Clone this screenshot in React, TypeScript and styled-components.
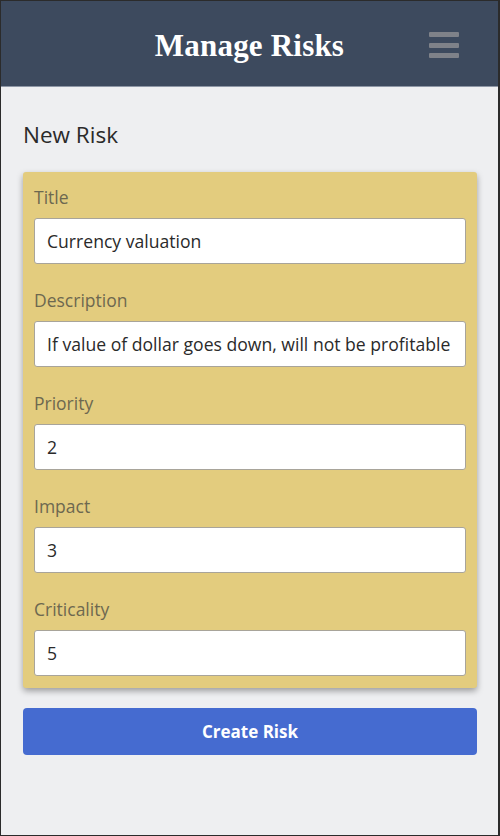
import React from 'react'
import styled, { createGlobalStyle } from 'styled-components'

const GlobalStyle = createGlobalStyle`
  html, body {
    margin: 0;
    padding: 0;
    background: #eeeff1;
  }
  * {
    box-sizing: border-box;
  }
`

const Frame = styled.div`
  width: 500px;
  height: 836px;
  border: 1px solid #2b2b2b;
  border-right-width: 2px;
  background: #eeeff1;
  font-family: 'Open Sans', 'Noto Sans', sans-serif;
  display: flex;
  flex-direction: column;
`

const Header = styled.header`
  height: 86px;
  flex-shrink: 0;
  padding-top: 5px;
  background: #3d4a5e;
  display: flex;
  align-items: center;
  justify-content: center;
  position: relative;
  border-bottom: 1px solid #8e97a6;
`

const Title = styled.h1`
  margin: 0;
  color: #ffffff;
  font-family: 'Liberation Serif', 'Times New Roman', serif;
  font-weight: bold;
  font-size: 31px;
  letter-spacing: 0.2px;
`

const MenuButton = styled.button`
  position: absolute;
  right: 39px;
  top: 31px;
  width: 30px;
  height: 26px;
  padding: 0;
  border: none;
  background: transparent;
  display: flex;
  flex-direction: column;
  justify-content: space-between;
  cursor: pointer;

  span {
    display: block;
    height: 5px;
    border-radius: 1px;
    background: #7f8289;
  }
`

const Content = styled.main`
  padding: 33px 21px 0 22px;
  display: flex;
  flex-direction: column;
`

const Heading = styled.h2`
  margin: 0 0 22px;
  font-size: 22.5px;
  font-weight: 400;
  color: #2a2a2a;
  line-height: 30px;
`

const Card = styled.form`
  background: #e3cc7e;
  border-radius: 3px;
  box-shadow: 0 3px 6px rgba(0, 0, 0, 0.35);
  padding: 10px 11px 12px 11px;
  display: flex;
  flex-direction: column;
`

const Field = styled.div<{ $first?: boolean }>`
  display: flex;
  flex-direction: column;
  margin-top: ${(p) => (p.$first ? '0' : '21px')};
`

const Label = styled.label`
  font-size: 17.5px;
  color: #6d6850;
  line-height: 30px;
  margin-bottom: 6px;
`

const Input = styled.input`
  height: 46px;
  width: 100%;
  border: 1px solid #a8a49a;
  border-radius: 3px;
  background: #ffffff;
  padding: 0 12px;
  font-family: 'Open Sans', 'Noto Sans', sans-serif;
  font-size: 17.6px;
  color: #2a2a2a;
  outline: none;
`

const SubmitButton = styled.button`
  margin-top: 20px;
  height: 47px;
  width: 100%;
  border: none;
  border-radius: 4px;
  background: #456bd0;
  color: #ffffff;
  font-family: 'Open Sans', 'Noto Sans', sans-serif;
  font-weight: 700;
  font-size: 17px;
  cursor: pointer;
`

const fields = [
  { label: 'Title', value: 'Currency valuation' },
  { label: 'Description', value: 'If value of dollar goes down, will not be profitable' },
  { label: 'Priority', value: '2' },
  { label: 'Impact', value: '3' },
  { label: 'Criticality', value: '5' },
]

export default function App() {
  return (
    <>
      <GlobalStyle />
      <Frame>
        <Header>
          <Title>Manage Risks</Title>
          <MenuButton aria-label="menu">
            <span />
            <span />
            <span />
          </MenuButton>
        </Header>
        <Content>
          <Heading>New Risk</Heading>
          <Card onSubmit={(e) => e.preventDefault()}>
            {fields.map((f, i) => (
              <Field key={f.label} $first={i === 0}>
                <Label>{f.label}</Label>
                <Input defaultValue={f.value} />
              </Field>
            ))}
          </Card>
          <SubmitButton type="button">Create Risk</SubmitButton>
        </Content>
      </Frame>
    </>
  )
}
